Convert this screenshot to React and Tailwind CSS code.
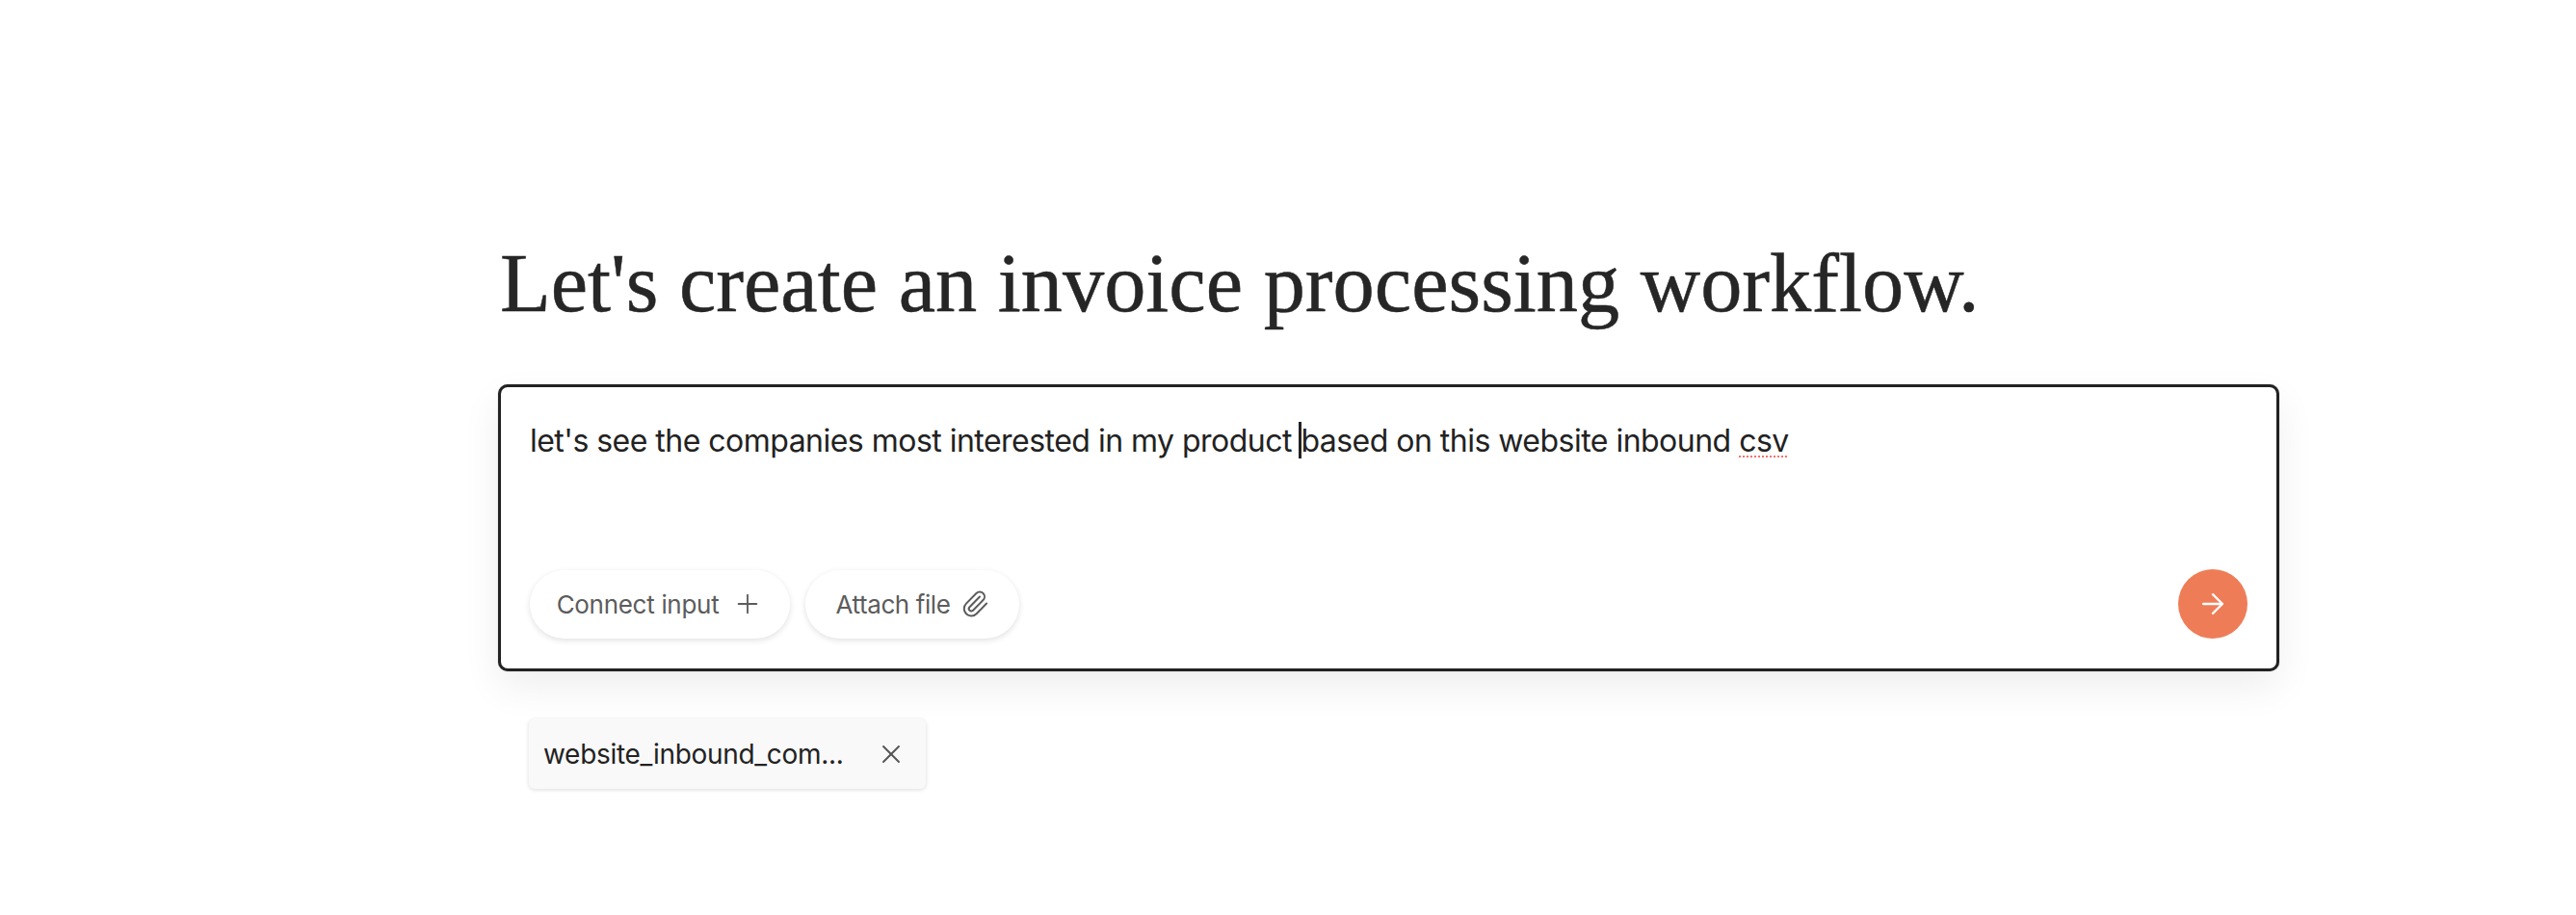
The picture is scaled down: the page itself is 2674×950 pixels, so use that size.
import React from "react";
import { Plus, Paperclip, ArrowRight, X } from "lucide-react";

const App = () => {
  return (
    <div className="min-h-[950px] bg-white pl-[517px] pt-[244px] font-['Inter',sans-serif]">
      <h1 className="ml-[2px] h-[155px] font-['Liberation_Serif',serif] text-[86.4px] leading-[100px] font-normal text-[#262626] [-webkit-text-stroke:0.5px_#262626]">
        Let's create an invoice processing workflow.
      </h1>

      <div className="flex h-[298px] w-[1849px] flex-col justify-between rounded-[10px] border-[3px] border-[#222222] bg-white pt-[29px] pr-[30px] pb-[31px] pl-[30px] shadow-[0_0_1px_rgba(34,34,34,0.6),0_16px_40px_rgba(0,0,0,0.07)]">
        <p className="text-[32px] leading-[44px] tracking-[-0.52px] text-[#222222]">
          let's see the companies most interested in my product{" "}
          <span className="-mx-[1px] inline-block h-[38px] w-[3px] translate-y-[7px] bg-[#222222]" />
          based on this website inbound{" "}
          <span className="underline decoration-[#f87171] decoration-dotted decoration-2 underline-offset-4">
            csv
          </span>
        </p>

        <div className="flex items-center justify-between">
          <div className="flex gap-4">
            <button className="flex h-[71px] w-[270px] items-center justify-center gap-[14px] rounded-full bg-white text-[26px] tracking-[-0.3px] text-[#5c5c5c] shadow-[0_2px_6px_rgba(0,0,0,0.12)]">
              Connect input
              <Plus size={32} strokeWidth={1.4} />
            </button>
            <button className="flex h-[71px] w-[222px] items-center justify-center gap-[10px] rounded-full bg-white text-[26px] tracking-[-0.4px] text-[#5c5c5c] shadow-[0_2px_6px_rgba(0,0,0,0.12)]">
              Attach file
              <Paperclip size={30} strokeWidth={1.6} />
            </button>
          </div>
          <button className="flex h-[72px] w-[72px] items-center justify-center rounded-full bg-[#ee7d57] text-white">
            <ArrowRight size={34} strokeWidth={1.6} />
          </button>
        </div>
      </div>

      <div className="mt-[49px] ml-[32px] flex h-[73px] w-[412px] items-center justify-between rounded-md bg-[#f9f9f9] pr-[20px] pl-[15px] text-[28px] tracking-[-0.3px] text-[#222222] shadow-[0_1px_4px_rgba(0,0,0,0.14)]">
        <span>website_inbound_com...</span>
        <X size={32} strokeWidth={1.4} className="text-[#555555]" />
      </div>
    </div>
  );
};

export default App;
